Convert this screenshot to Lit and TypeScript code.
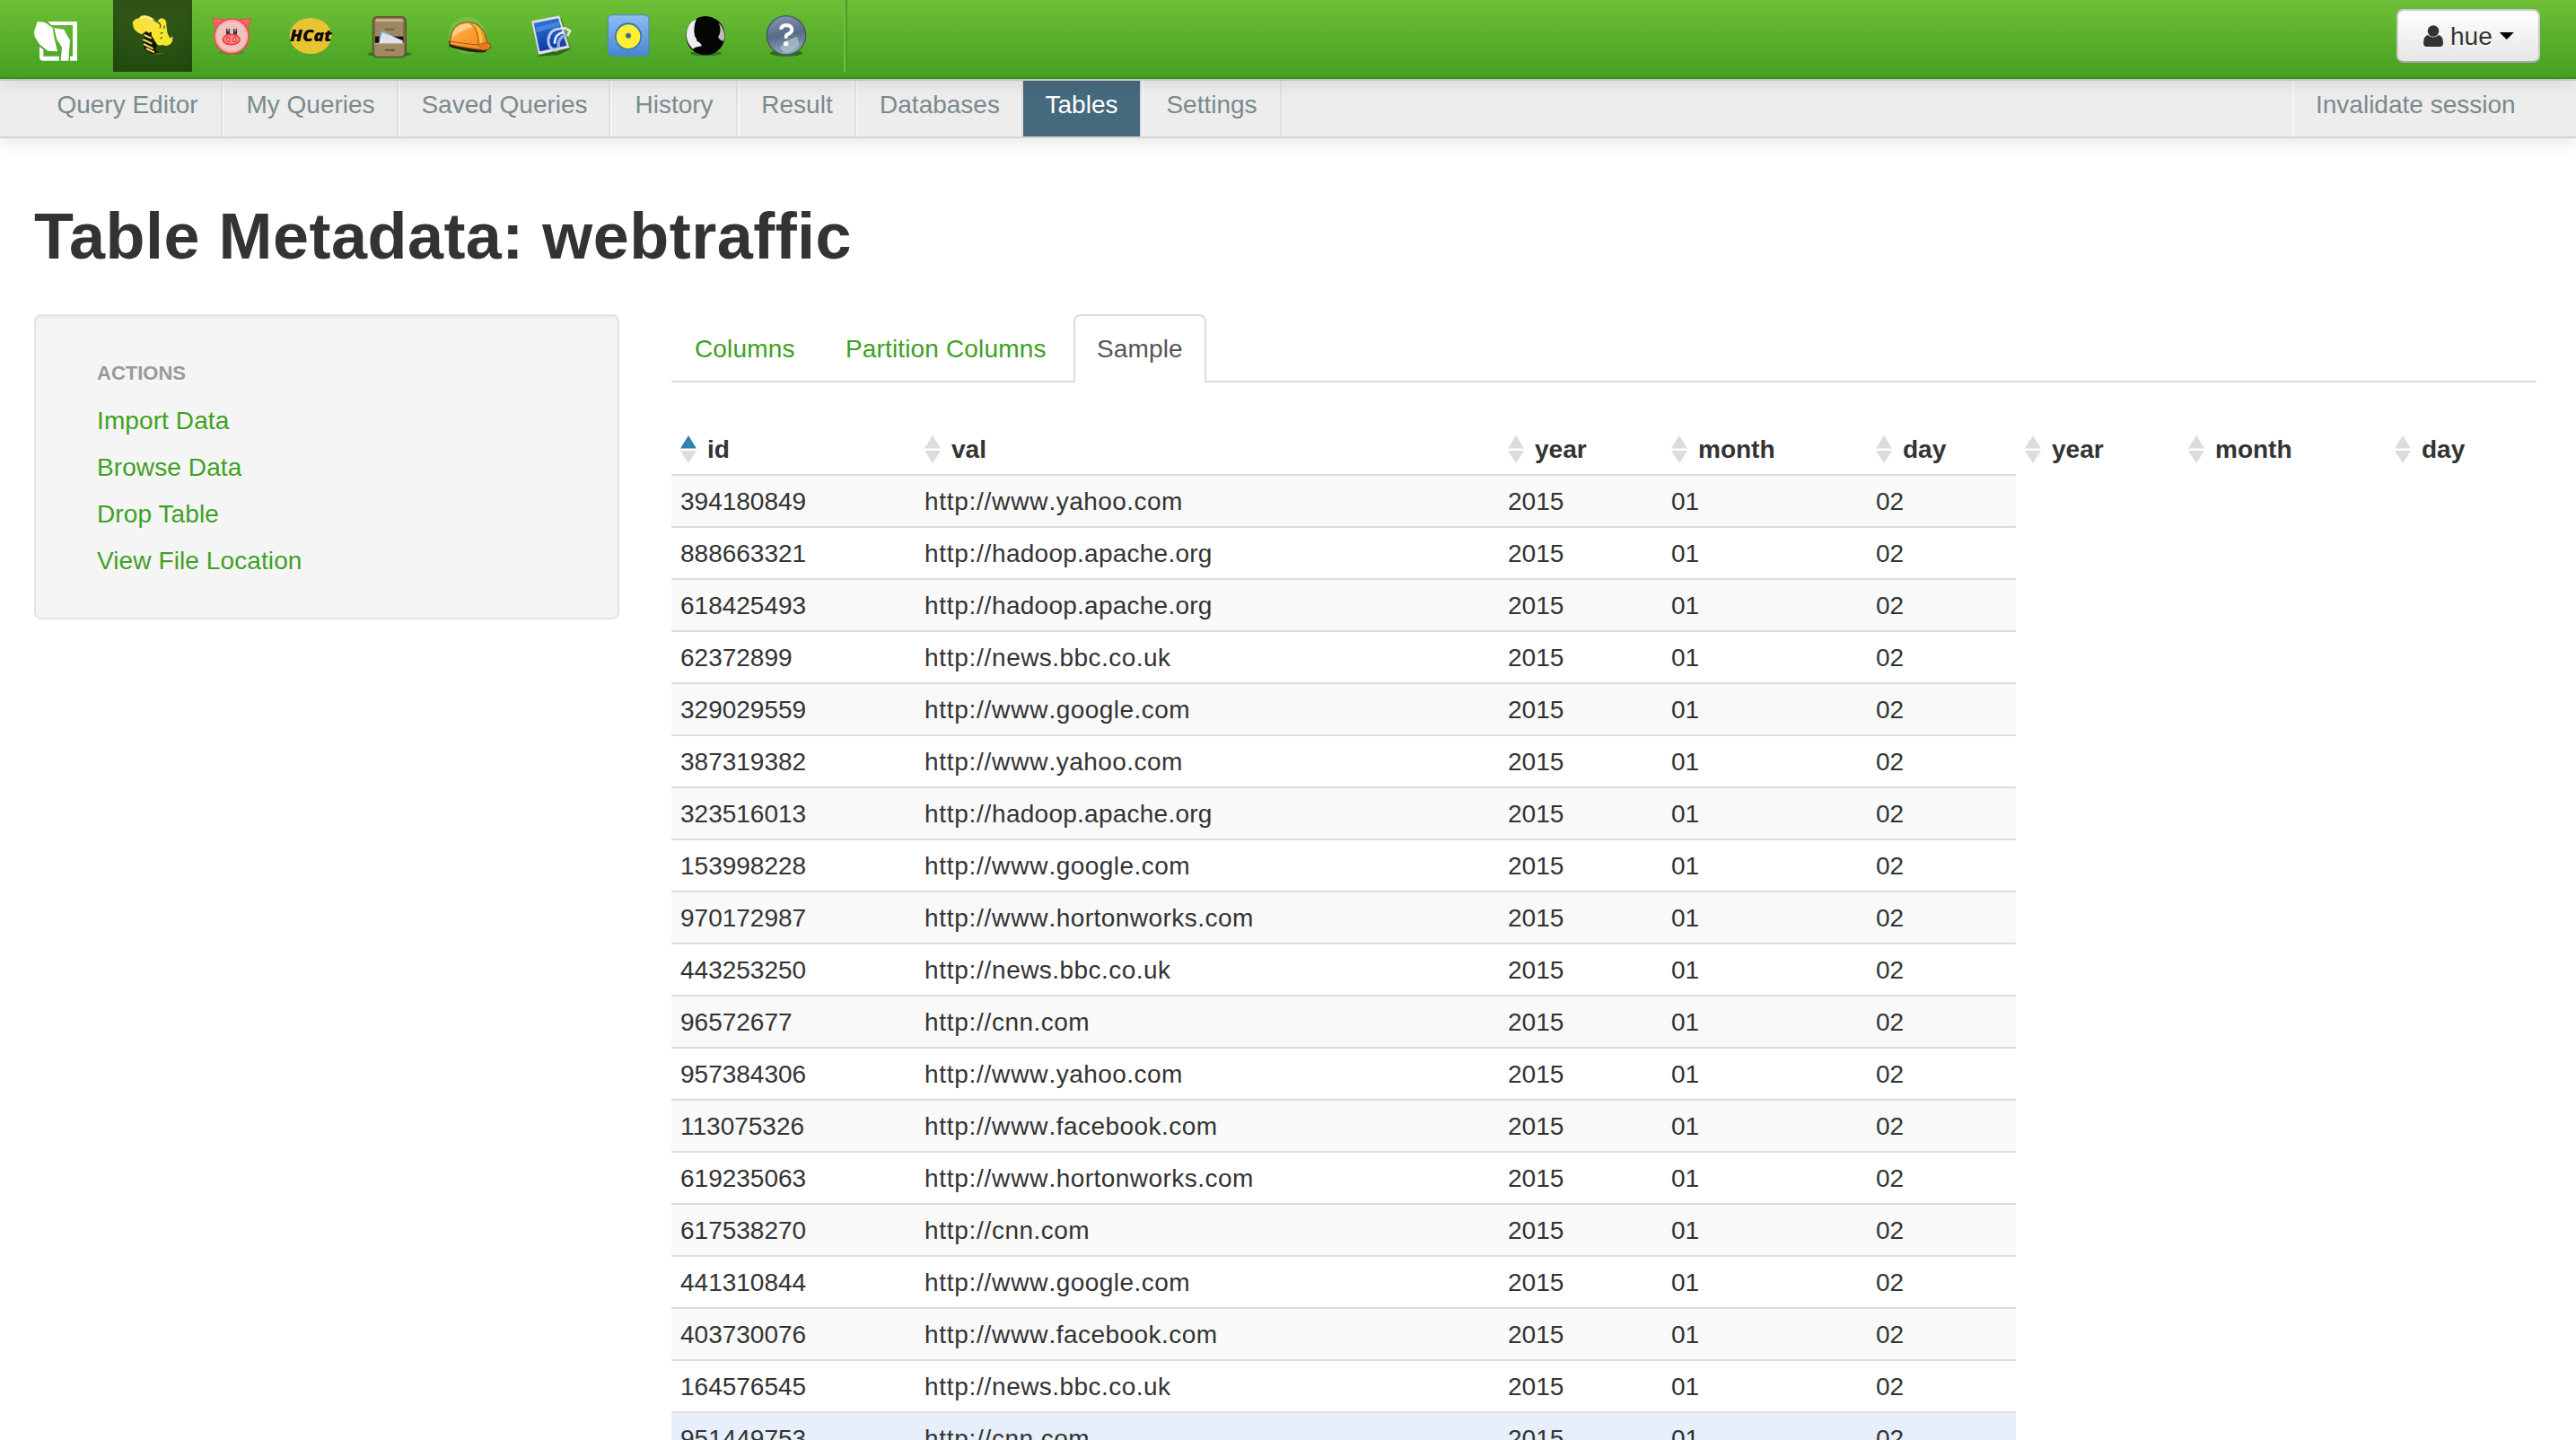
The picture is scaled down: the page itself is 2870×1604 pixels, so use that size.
import { LitElement, html, svg, css } from "lit";
import { customElement, property } from "lit/decorators.js";
import { classMap } from "lit/directives/class-map.js";

const beeIcon = svg`
  <path d="M484 104 L512 108 L528 134 L520 168 L538 180 L508 180 L484 166 L478 136 Z" fill="#15160a"/>
  <path d="M482 117 L506 128 M478 132 L508 146 M480 147 L512 163 M489 162 L516 175" stroke="#f1de57" stroke-width="6" fill="none"/>
  <path d="M512 184 L552 178 L524 176Z" fill="#8a5a16"/>
  <path d="M524 80 Q530 60 542 61 Q558 66 556 84 L560 112 L566 124 Q571 132 576 119 Q580 138 570 147 Q556 158 544 149 Q528 156 522 144 L506 118 L508 88Z" fill="#f7e52f"/>
  <path d="M443 76 Q446 64 466 60 Q468 51 484 51 Q504 54 518 66 L536 80 L530 96 L514 88 L510 104 L498 110 L488 104 L474 115 Q452 106 446 92Z" fill="#f8e33c"/>
  <path d="M468 62 Q482 52 500 60 L524 76" fill="none" stroke="#fbf3a8" stroke-width="5"/>
  <path d="M512 66 L532 78 M532 74 L537 86 L534 94 M536 112 L544 109 M542 124 L536 130 M550 86 L548 96" fill="none" stroke="#4a430f" stroke-width="3.5"/>`;

const pigIcon = svg`
  <ellipse cx="774" cy="176" rx="44" ry="7" fill="#2d7a18" opacity=".35"/>
  <path d="M710 61 L752 66 L724 98Z M838 61 L798 66 L826 98Z" fill="#f26b6b" stroke="#ee4747" stroke-width="3"/>
  <circle cx="774" cy="121" r="58" fill="url(#pigSkin)" stroke="#ee4a4a" stroke-width="5"/>
  <rect x="756" y="96" width="12" height="20" fill="#343838"/><rect x="760" y="96" width="5" height="9" fill="#9aa"/>
  <rect x="780" y="96" width="12" height="20" fill="#343838"/><rect x="784" y="96" width="5" height="9" fill="#9aa"/>
  <ellipse cx="773" cy="132" rx="28" ry="17" fill="#f78b88" stroke="#f03c3c" stroke-width="5"/>
  <ellipse cx="763" cy="132" rx="5" ry="8" fill="#f9b7b4" stroke="#ee3838" stroke-width="4"/>
  <ellipse cx="784" cy="132" rx="5" ry="8" fill="#f9b7b4" stroke="#ee3838" stroke-width="4"/>`;

const hcatIcon = svg`
  <ellipse cx="1038" cy="120" rx="70" ry="60" fill="#e8c431"/>
  <text class="hcat" x="969" y="138" textLength="141" lengthAdjust="spacingAndGlyphs">HCat</text>`;

const cabinetIcon = svg`
  <ellipse cx="1302" cy="181" rx="74" ry="10" fill="#1f4d10" opacity=".55"/>
  <path d="M1246 70 Q1246 56 1260 56 H1344 Q1357 56 1357 70 V180 L1348 191 H1254 L1246 180Z" fill="#7b6846" stroke="#54462e" stroke-width="3"/>
  <path d="M1258 62 H1344 L1350 72 H1252Z" fill="#c7b48c"/>
  <rect x="1254" y="72" width="94" height="50" fill="#9c8862"/>
  <rect x="1286" y="95" width="32" height="6" rx="3" fill="#75623f"/>
  <rect x="1254" y="122" width="94" height="21" fill="#15110b"/>
  <path d="M1266 144 L1277 106 L1346 136 V146Z" fill="#dde1ec"/>
  <path d="M1268 132 L1277 106 L1300 115" stroke="#64c0de" stroke-width="4" fill="none"/>
  <path d="M1252 144 H1350 V180 L1342 188 H1258 L1252 180Z" fill="#a08b64"/>
  <path d="M1252 146 H1350" stroke="#c0ad85" stroke-width="4"/>
  <rect x="1286" y="164" width="34" height="7" rx="3" fill="#6c5a3b"/>`;

const hatIcon = svg`
  <circle cx="182" cy="118" r="62" fill="#a8e27e" opacity=".22"/>
  <path d="M120 138 L122 156 Q190 178 240 175 L262 158 L256 146Z" fill="#2a2208"/>
  <path d="M124 138 Q128 78 178 74 Q238 74 248 142 Q262 146 261 155 Q252 172 226 166 Q160 158 124 148Z" fill="url(#hatSkin)" stroke="#8a4a08" stroke-width="3"/>
  <path d="M132 124 Q138 82 178 80 Q194 80 204 90 Q166 96 132 124Z" fill="#ffd9a0" opacity=".8"/>
  <path d="M194 80 Q222 100 218 148" stroke="#a65506" stroke-width="3" fill="none"/>
  <path d="M208 82 Q234 98 234 146 L224 148 Q224 104 204 82Z" fill="#fcc24a"/>
  <path d="M124 138 Q170 146 216 150 Q240 142 250 144" stroke="#a65506" stroke-width="3" fill="none"/>
  <path d="M216 152 Q240 140 258 152 Q254 168 228 166Z" fill="#e6791a"/>`;

const stampIcon = svg`
  <path d="M400 76 L496 60 L527 164 L486 184 L420 188Z" fill="#173d0b" opacity=".6"/>
  <path d="M396 70 L490 52 L524 160 L420 183Z" fill="#e4e4e0" stroke="#8d9385" stroke-width="2" stroke-dasharray="5 3"/>
  <path d="M404 77 L486 61 L514 152 L424 172Z" fill="url(#stampBlue)"/>
  <path d="M410 92 L488 72 L492 86 L414 108Z" fill="#7fb6ee" opacity=".4"/>
  <path d="M484 168 Q450 166 453 130 Q458 98 492 96" fill="none" stroke="#bccdf0" stroke-width="9"/>
  <path d="M474 146 Q474 112 504 108" stroke="#e6ecf8" stroke-width="8" fill="none"/>
  <path d="M492 95 L508 94 L525 103 L517 120" fill="none" stroke="#dfe3e8" stroke-width="8"/>
  <path d="M486 160 Q484 122 514 118" stroke="#8eaae2" stroke-width="10" fill="none"/>
  <path d="M500 130 L514 152 L494 157Z" fill="#1e46ae"/>`;

const diskIcon = svg`
  <rect x="652" y="50" width="137" height="137" rx="15" fill="url(#diskBlue)" stroke="#4387c9" stroke-width="3"/>
  <circle cx="720" cy="121" r="45" fill="#3474ae"/>
  <circle cx="720" cy="122" r="40" fill="#ffee32"/>
  <circle cx="720" cy="119" r="9" fill="#22719c" stroke="#a8a53a" stroke-width="2"/>`;

const headIcon = svg`
  <ellipse cx="980" cy="178" rx="52" ry="9" fill="#173f0b" opacity=".5"/>
  <circle cx="978" cy="119" r="65" fill="#050505"/>
  <path d="M948 62 Q914 78 914 118 Q916 146 936 164 Q944 156 966 154 Q962 142 950 138 Q948 128 942 120 Q936 92 948 62Z" fill="#efefef"/>
  <path d="M1022 76 Q1042 96 1042 122 Q1040 136 1036 138 Q1024 134 1020 124 Q1034 104 1022 76Z" fill="#bcbcbc"/>`;

const helpIcon = svg`
  <ellipse cx="1248" cy="178" rx="54" ry="10" fill="#173f0b" opacity=".6"/>
  <circle cx="1248" cy="118" r="65" fill="url(#helpBlue)" stroke="#44566b" stroke-width="4"/>
  <path d="M1226 160 L1250 136 L1284 122 L1292 150 Q1268 178 1242 176Z" fill="#b6c9d4" opacity=".65"/>
  <path d="M1230 98 Q1232 84 1249 84 Q1267 86 1267 99 Q1266 110 1250 116 Q1247 118 1247 128" fill="none" stroke="#fff" stroke-width="12"/>
  <circle cx="1247" cy="146" r="8" fill="#fff"/>`;

const apps = [
  { id: "bee", box: "378 0 264 240", art: beeIcon, active: true },
  { id: "pig", box: "642 0 264 240", art: pigIcon },
  { id: "hcat", box: "906 0 264 240", art: hcatIcon },
  { id: "files", box: "1170 0 264 240", art: cabinetIcon },
  { id: "jobs", box: "54 0 264 240", art: hatIcon },
  { id: "designer", box: "318 0 264 240", art: stampIcon },
  { id: "workflow", box: "582 0 264 240", art: diskIcon },
  { id: "users", box: "846 0 264 240", art: headIcon },
  { id: "help", box: "1110 0 264 240", art: helpIcon },
];

const menu: { label: string; width: number; active?: boolean }[] = [
  { label: "Query Editor", width: 212 },
  { label: "My Queries", width: 196 },
  { label: "Saved Queries", width: 236 },
  { label: "History", width: 142 },
  { label: "Result", width: 132 },
  { label: "Databases", width: 186 },
  { label: "Tables", width: 132, active: true },
  { label: "Settings", width: 156 },
];

const columns = [
  { name: "id", width: 272 },
  { name: "val", width: 650 },
  { name: "year", width: 182 },
  { name: "month", width: 228 },
  { name: "day", width: 166 },
  { name: "year", width: 182 },
  { name: "month", width: 230 },
  { name: "day", width: 168 },
];

const rows: [string, string][] = [
  ["394180849", "www.yahoo.com"],
  ["888663321", "hadoop.apache.org"],
  ["618425493", "hadoop.apache.org"],
  ["62372899", "news.bbc.co.uk"],
  ["329029559", "www.google.com"],
  ["387319382", "www.yahoo.com"],
  ["323516013", "hadoop.apache.org"],
  ["153998228", "www.google.com"],
  ["970172987", "www.hortonworks.com"],
  ["443253250", "news.bbc.co.uk"],
  ["96572677", "cnn.com"],
  ["957384306", "www.yahoo.com"],
  ["113075326", "www.facebook.com"],
  ["619235063", "www.hortonworks.com"],
  ["617538270", "cnn.com"],
  ["441310844", "www.google.com"],
  ["403730076", "www.facebook.com"],
  ["164576545", "news.bbc.co.uk"],
  ["951449753", "cnn.com"],
];

@customElement("hue-navbar")
class HueNavbar extends LitElement {
  static styles = css`
    :host { display: block; position: relative; z-index: 2; }
    .bar { display: flex; box-sizing: border-box; height: 88px; padding-right: 40px;
      background: linear-gradient(#6dbf36, #6abb33 12%, #45a022); border-bottom: 2px solid #3b8b1d;
      box-shadow: 0 2px 20px rgba(0, 0, 0, .12); }
    .logo { width: 126px; height: 80px; }
    .app { width: 88px; height: 80px; }
    .app.active { background: rgba(0, 0, 0, .53); box-shadow: inset 0 6px 16px rgba(0, 0, 0, .12); }
    svg { display: block; width: 100%; height: 100%; }
    .hcat { font: italic 800 52px "Open Sans", "Noto Sans", sans-serif; fill: #0b0a04; }
    .line { width: 2px; height: 80px; margin-left: 22px; background: #72bf3e; }
    .line2 { width: 2px; height: 86px; background: #459f25; margin-right: auto; }
    .user { display: flex; align-items: center; box-sizing: border-box; width: 160px; height: 60px;
      margin-top: 10px; padding-left: 27px; border: 2px solid #c9cbc6; border-bottom-color: #a9aaa8;
      border-radius: 8px; background: linear-gradient(#fff, #e6e6e6); color: #333;
      font: 28px/40px "Liberation Sans", Arial, sans-serif; text-shadow: 0 2px 2px rgba(255, 255, 255, .75); }
    .person { width: 24px; height: 26px; margin-right: 7px; }
    .name { padding-top: 1px; }
    .caret { width: 16px; height: 8px; margin-left: 8px; background: #000; clip-path: polygon(0 0, 100% 0, 50% 100%); }
  `;
  render() {
    return html`<div class="bar">
      <div class="logo"><svg viewBox="0 0 378 240">
        <path d="M160 72 H258 V203 H234 V188 H243 V84 H172Z" fill="#fff"/>
        <path d="M132 156 L145 166 V188 H198 V203 H142 Q132 203 132 190Z" fill="#fff"/>
        <path d="M125 72 L150 75 L176 93 L180 120 L192 172 L160 170 L132 148 L116 122 L114 106Z" fill="#fff"/>
        <path d="M181 94 L214 98 L222 114 L234 134 L229 203 L203 203 L207 158 L190 132Z" fill="#fff"/>
      </svg></div>
      ${apps.map((a) => html`<div class=${classMap({ app: true, active: !!a.active })}>
        <svg viewBox=${a.box}>
          <defs>
            <radialGradient id="pigSkin"><stop offset="0" stop-color="#f8b3b3"/><stop offset=".8" stop-color="#f5c3c3"/><stop offset="1" stop-color="#ef9090"/></radialGradient>
            <linearGradient id="hatSkin" x2="1" y2="1"><stop offset="0" stop-color="#ffc070"/><stop offset=".5" stop-color="#fd9a2c"/><stop offset="1" stop-color="#f0861c"/></linearGradient>
            <linearGradient id="stampBlue" x2=".3" y2="1"><stop offset="0" stop-color="#2c7fe0"/><stop offset="1" stop-color="#0f37a4"/></linearGradient>
            <linearGradient id="diskBlue" x2="0" y2="1"><stop offset="0" stop-color="#90bdf3"/><stop offset="1" stop-color="#4587d0"/></linearGradient>
            <linearGradient id="helpBlue" x2=".2" y2="1"><stop offset="0" stop-color="#8a9cb5"/><stop offset=".55" stop-color="#566b88"/><stop offset="1" stop-color="#8ba3b4"/></linearGradient>
          </defs>${a.art}</svg></div>`)}
      <div class="line"></div><div class="line2"></div>
      <div class="user">
        <svg class="person" viewBox="0 0 24 26"><circle cx="12" cy="7.5" r="6.3" fill="#333"/><path d="M6 12 Q12 17 18 12 Q23 13 23 21 Q23 25 19 25 H5 Q1 25 1 21 Q1 13 6 12Z" fill="#333"/></svg>
        <span class="name">hue</span><span class="caret"></span>
      </div>
    </div>`;
  }
}

@customElement("hue-subnav")
class HueSubnav extends LitElement {
  static styles = css`
    :host { display: block; }
    .bar { display: flex; box-sizing: border-box; height: 66px; padding-left: 36px; background: #ededed;
      border-top: 2px solid #d4d4d4; border-bottom: 2px solid #d4d4d4; box-shadow: 0 2px 20px rgba(0, 0, 0, .12);
      font: 28px/40px "Liberation Sans", Arial, sans-serif; color: #7b8a8b; }
    .item { box-sizing: border-box; height: 62px; padding-top: 7px; text-align: center; white-space: nowrap;
      border-left: 2px solid #f5f5f5; border-right: 2px solid #e0e0e0; }
    .item:first-child { border-left-color: transparent; }
    .active { background: #456a7d; color: #fff; border-left: 0; border-right-color: #dcdcdc; }
    .right { margin-left: auto; width: 316px; border-right: 0; padding-left: 24px; text-align: left; }
  `;
  render() {
    return html`<div class="bar">
      ${menu.map((m) => html`<div class=${classMap({ item: true, active: !!m.active })} style="width:${m.width}px">${m.label}</div>`)}
      <div class="item right">Invalidate session</div>
    </div>`;
  }
}

@customElement("sort-mark")
class SortMark extends LitElement {
  static styles = css`
    :host { display: block; width: 18px; height: 31px; }
    svg { display: block; }
    .up, .down { fill: #dcdcdc; }
    .up.on { fill: #3182b4; }
  `;
  @property({ type: Boolean }) sorted = false;
  render() {
    return html`<svg width="18" height="31" viewBox="0 0 18 31">
      <path class=${classMap({ up: true, on: this.sorted })} d="M9 0 L18 14.5 H0Z"/>
      <path class="down" d="M0 17 H18 L9 31Z"/></svg>`;
  }
}

@customElement("sample-table")
class SampleTable extends LitElement {
  static styles = css`
    :host { display: block; font: 28px/40px "Liberation Sans", Arial, sans-serif; color: #333; }
    .row { display: flex; }
    .th { display: flex; box-sizing: border-box; height: 48px; padding: 1px 0 0 10px; gap: 12px; font-weight: 700; }
    sort-mark { margin-top: 4px; }
    .body { width: 1498px; }
    .tr { height: 56px; border-top: 2px solid #ddd; }
    .tr:nth-child(odd) { background: #f9f9f9; }
    .tr:last-child { background: #e6effb; }
    .td { box-sizing: border-box; height: 56px; padding: 9px 0 0 10px; white-space: nowrap; }
    .scheme { letter-spacing: .72px; }
    .www { letter-spacing: .9px; }
    .host { letter-spacing: .46px; }
    .host.tight { letter-spacing: .25px; }
  `;
  private url(host: string) {
    const www = host.startsWith("www") ? "www" : "";
    const rest = host.slice(www.length);
    return html`<span class="scheme">http://</span><span class="www">${www}</span><span class=${classMap({ host: true, tight: rest.length > 16 })}>${rest}</span>`;
  }
  render() {
    return html`<div class="row">
        ${columns.map((c, i) => html`<div class="th" style="width:${c.width}px"><sort-mark ?sorted=${i === 0}></sort-mark>${c.name}</div>`)}
      </div>
      <div class="body">
        ${rows.map(([id, host]) => html`<div class="row tr">
          ${[id, this.url(host), "2015", "01", "02"].map((v, i) => html`<div class="td" style="width:${columns[i].width}px">${v}</div>`)}
        </div>`)}
      </div>`;
  }
}

@customElement("app-root")
class AppRoot extends LitElement {
  static styles = css`
    :host { display: block; height: 1604px; overflow: hidden; background: #fff;
      font: 28px/40px "Liberation Sans", Arial, sans-serif; color: #333; }
    .title { box-sizing: border-box; margin: 0; padding: 69px 0 0 38px; font-size: 72px; line-height: 80px; font-weight: 700; letter-spacing: .47px; height: 196px; }
    .main { display: flex; gap: 58px; padding: 0 44px 0 38px; align-items: flex-start; }
    .well { box-sizing: border-box; flex: none; width: 652px; height: 340px; padding: 44px 0 0 68px; background: #f5f5f5;
      border: 2px solid #e3e3e3; border-radius: 8px; box-shadow: inset 0 2px 2px rgba(0, 0, 0, .05); text-shadow: 0 2px 0 rgba(255, 255, 255, .5); }
    .head { padding-bottom: 6px; font-size: 22px; font-weight: 700; color: #999; line-height: 40px; text-transform: uppercase; }
    .link { height: 52px; line-height: 53px; color: #40a023; letter-spacing: .1px; }
    .content { flex: 1; }
    .tabs { display: flex; height: 74px; border-bottom: 2px solid #ddd; margin-bottom: 54px; }
    .tab { box-sizing: border-box; height: 74px; padding: 19px 26px 0; color: #40a023; white-space: nowrap; letter-spacing: .15px; }
    .first { width: 168px; }
    .second { width: 280px; }
    .current { width: 148px; height: 76px; padding: 17px 0 0 24px; color: #555; background: #fff; border: 2px solid #ddd;
      border-bottom: 0; border-radius: 8px 8px 0 0; }
  `;
  render() {
    return html`<hue-navbar></hue-navbar><hue-subnav></hue-subnav>
      <h1 class="title">Table Metadata: webtraffic</h1>
      <div class="main">
        <div class="well">
          <div class="head">Actions</div>
          <div class="link">Import Data</div>
          <div class="link">Browse Data</div>
          <div class="link">Drop Table</div>
          <div class="link">View File Location</div>
        </div>
        <div class="content">
          <div class="tabs">
            <div class="tab first">Columns</div>
            <div class="tab second">Partition Columns</div>
            <div class="tab current">Sample</div>
          </div>
          <sample-table></sample-table>
        </div>
      </div>`;
  }
}
